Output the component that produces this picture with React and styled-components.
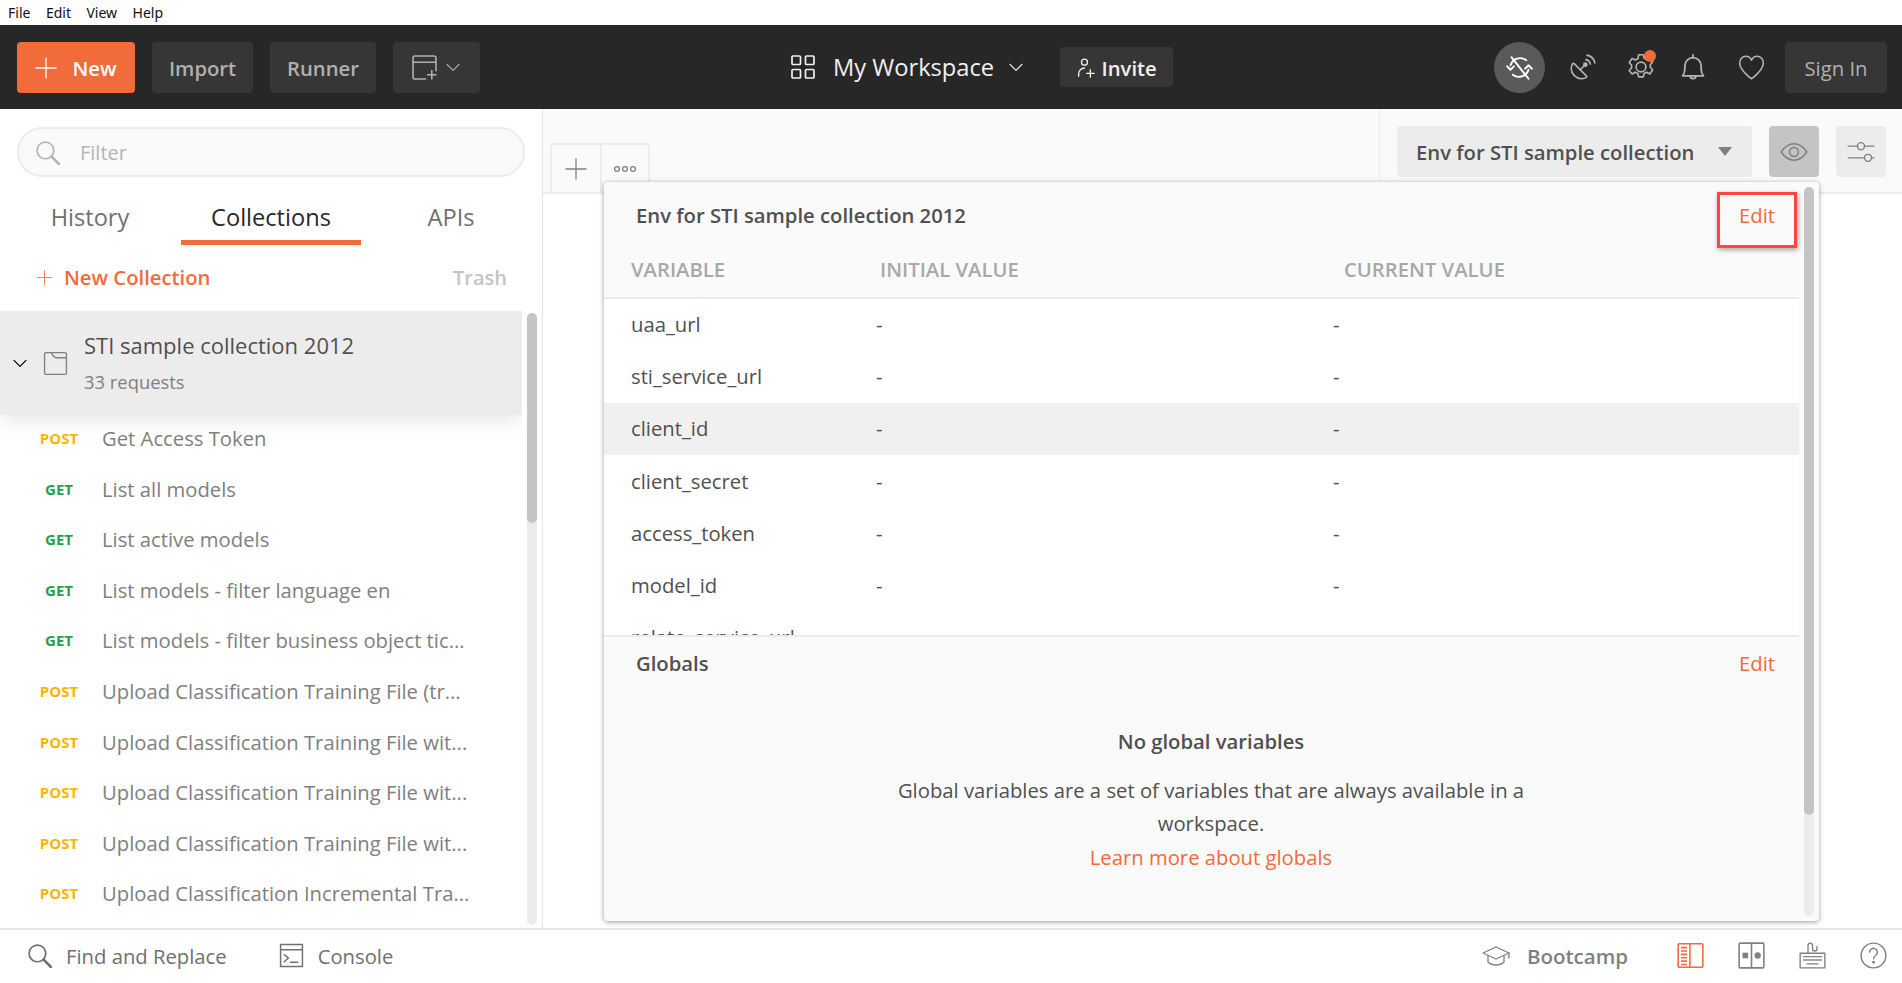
import React from 'react';
import styled, { createGlobalStyle } from 'styled-components';

const GlobalStyle = createGlobalStyle`
  html, body {
    margin: 0;
    padding: 0;
    background: #fff;
    font-family: "Open Sans", "Noto Sans", sans-serif;
  }
  * { box-sizing: border-box; }
`;

const Page = styled.div`
  display: flex;
  flex-direction: column;
  width: 1902px;
  height: 983px;
  overflow: hidden;
`;

const MenuBar = styled.div`
  display: flex;
  align-items: center;
  gap: 15.5px;
  height: 25px;
  padding: 0 8px 1px;
  font-family: "Noto Sans", sans-serif;
  font-size: 14px;
  color: #111;
`;

const Header = styled.header`
  display: flex;
  align-items: center;
  height: 84px;
  padding: 0 15px 0 17px;
  background: #272727;
`;

const Group = styled.div`
  display: flex;
  align-items: center;
`;

const HeaderButton = styled.button`
  display: flex;
  align-items: center;
  justify-content: center;
  height: 51px;
  width: ${(p) => p.$w}px;
  margin-right: 17px;
  padding: 1px 0 0;
  border: none;
  border-radius: 4px;
  background: #363636;
  color: #b0b0b0;
  font: 600 20.25px "Open Sans", sans-serif;
`;

const NewButton = styled(HeaderButton)`
  gap: 15px;
  background: #f26b3a;
  color: #fff;
`;

const WindowButton = styled(HeaderButton)`
  gap: 8px;
  margin-right: 0;
  padding: 0;
`;

const WorkspaceGroup = styled(Group)`
  margin-left: 311px;
  color: #f0f0f0;
`;

const WorkspaceName = styled.span`
  margin: 0 14px 0 18px;
  font-size: 23.7px;
  line-height: 30px;
`;

const InviteButton = styled.button`
  display: flex;
  align-items: center;
  justify-content: center;
  gap: 5px;
  width: 113px;
  height: 40px;
  margin-left: 36px;
  padding: 1px 0 0;
  border: none;
  border-radius: 4px;
  background: #363636;
  color: #f0f0f0;
  font: 600 20.25px "Open Sans", sans-serif;
`;

const HeaderRight = styled(Group)`
  margin-left: auto;
  color: #b4b4b4;
`;

const SyncCircle = styled.div`
  display: flex;
  align-items: center;
  justify-content: center;
  width: 51px;
  height: 51px;
  border-radius: 50%;
  background: #5a5a5a;
  color: #fff;
`;

const HeaderIcon = styled.div`
  position: relative;
  display: flex;
  align-items: center;
  justify-content: center;
  width: 28px;
  height: 28px;
  margin-left: ${(p) => p.$gap}px;
`;

const Dot = styled.span`
  position: absolute;
  top: -3px;
  right: -1px;
  width: 12px;
  height: 12px;
  border-radius: 50%;
  background: #f26b3a;
`;

const SignIn = styled.button`
  width: 102px;
  height: 51px;
  margin-left: 20px;
  padding: 1px 0 0;
  border: none;
  border-radius: 4px;
  background: #363636;
  color: #b0b0b0;
  font: 400 20.25px "Open Sans", sans-serif;
`;

const Body = styled.div`
  display: flex;
  flex: 1;
  min-height: 0;
`;

const Sidebar = styled.aside`
  display: flex;
  flex-direction: column;
  flex: 0 0 543px;
  border-right: 1px solid #e6e6e6;
`;

const FilterBox = styled.div`
  display: flex;
  align-items: center;
  height: 50px;
  margin: 18px 17px 0;
  padding: 0 0 0 16px;
  border: 2px solid #ececec;
  border-radius: 25px;
  background: #fafafa;
  color: #b4b4b4;
  font-size: 20px;
`;

const FilterLabel = styled.span`
  margin-left: 20px;
`;

const Tabs = styled.div`
  display: flex;
  height: 50px;
  margin-top: 18px;
  padding-left: 17px;
`;

const Tab = styled.div`
  display: flex;
  align-items: center;
  justify-content: center;
  width: ${(p) => p.$w}px;
  margin-left: ${(p) => p.$ml || 0}px;
  padding-bottom: 1px;
  border-bottom: 5px solid ${(p) => (p.$active ? '#f26b3a' : 'transparent')};
  color: ${(p) => (p.$active ? '#282828' : '#707070')};
  font-size: 23.6px;
`;

const NewRow = styled.div`
  display: flex;
  align-items: center;
  height: 50px;
  margin-top: 7px;
  padding: 0 35px 0 37px;
  color: #f26b3a;
  font-size: 20.25px;
  font-weight: 600;
`;

const NewRowLabel = styled.span`
  margin-left: 12px;
`;

const Trash = styled.span`
  margin-left: auto;
  color: #c4c4c4;
  font-weight: 600;
  font-size: 20px;
`;

const ListArea = styled.div`
  display: flex;
  flex: 1;
  min-height: 0;
  margin-top: 9px;
`;

const List = styled.div`
  flex: 0 0 522px;
  overflow: hidden;
`;

const CollectionRow = styled.div`
  position: relative;
  display: flex;
  align-items: center;
  height: 104px;
  margin-bottom: -2px;
  padding-left: 12px;
  background: #ececec;
  box-shadow: 0 8px 16px rgba(0, 0, 0, 0.08);
`;

const CollectionIcon = styled.div`
  display: flex;
  margin: 0 16px 0 15px;
  color: #808080;
`;

const CollectionText = styled.div`
  margin-bottom: 3px;
`;

const CollectionName = styled.div`
  color: #505050;
  font-size: 22px;
  line-height: 30px;
`;

const CollectionCount = styled.div`
  margin-top: 10px;
  color: #808080;
  font-size: 18.4px;
  line-height: 24px;
`;

const RequestRow = styled.div`
  display: flex;
  align-items: center;
  height: 50.55px;
`;

const Method = styled.span`
  flex: 0 0 40px;
  margin: 0 23px 0 39px;
  text-align: center;
  color: ${(p) => (p.$verb === 'POST' ? '#ffb400' : '#26a04b')};
  font-size: 15px;
  font-weight: 700;
`;

const RequestName = styled.span`
  color: #808080;
  font-size: 20.25px;
  white-space: nowrap;
`;

const Rail = styled.div`
  flex: 0 0 10px;
  margin: ${(p) => p.$margin};
  border-radius: 5px;
  background: #ececec;
`;

const Thumb = styled.div`
  height: ${(p) => p.$h}px;
  border-radius: 5px;
  background: #c4c4c4;
`;

const Main = styled.main`
  position: relative;
  display: flex;
  flex-direction: column;
  flex: 1;
  min-width: 0;
`;

const TabBar = styled.div`
  display: flex;
  height: 85px;
  padding-left: 7px;
  background: #fafafa;
  border-bottom: 2px solid #ececec;
`;

const TabActions = styled.div`
  display: flex;
  align-self: flex-end;
  height: 51px;
  margin-bottom: -2px;
  border: 2px solid #ececec;
  border-radius: 3px 3px 0 0;
  color: #808080;
`;

const TabAction = styled.div`
  display: flex;
  align-items: center;
  justify-content: center;
  width: ${(p) => p.$w}px;
  border-right: ${(p) => (p.$divider ? '2px solid #ececec' : 'none')};
`;

const EnvArea = styled.div`
  display: flex;
  gap: 17px;
  margin-left: auto;
  padding: 17px 16px 0 17px;
  border-left: 1px solid #ececec;
`;

const EnvSelect = styled.div`
  display: flex;
  align-items: center;
  justify-content: space-between;
  width: 355px;
  height: 51px;
  padding: 0 20px 0 19px;
  border-radius: 4px;
  background: #ececec;
  color: #505050;
  font-size: 20.25px;
  font-weight: 600;
`;

const Caret = styled.span`
  width: 0;
  height: 0;
  border-left: 7px solid transparent;
  border-right: 7px solid transparent;
  border-top: 9px solid #808080;
`;

const EnvButton = styled.div`
  display: flex;
  align-items: center;
  justify-content: center;
  width: 50px;
  height: 51px;
  border-radius: 4px;
  background: ${(p) => (p.$on ? '#c4c4c4' : '#ececec')};
  color: #808080;
`;

const Popup = styled.div`
  position: absolute;
  top: 73px;
  left: 61px;
  display: flex;
  width: 1215px;
  height: 739px;
  border-radius: 4px;
  background: #fafafa;
  box-shadow: 0 1px 5px rgba(0, 0, 0, 0.4);
`;

const PopupBody = styled.div`
  display: flex;
  flex-direction: column;
  flex: 1;
  min-width: 0;
`;

const VarsSection = styled.section`
  flex: 0 0 453px;
  overflow: hidden;
`;

const SectionHead = styled.div`
  display: flex;
  align-items: center;
  justify-content: space-between;
  height: ${(p) => p.$h}px;
  padding: 0 24px 0 32px;
  color: #505050;
  font-size: 20.25px;
  font-weight: 600;
`;

const EditLink = styled.span`
  color: #f26b3a;
  font-size: 20.25px;
  font-weight: 400;
`;

const TableHead = styled.div`
  display: grid;
  grid-template-columns: 249px 464px 1fr;
  align-items: center;
  height: 50.5px;
  padding: 0 0 6.5px 27px;
  border-bottom: 2px solid #ececec;
  color: #a8a8a8;
  font-size: 20.25px;
  font-weight: 600;
`;

const VarRows = styled.div`
  background: #fff;
`;

const VarRow = styled.div`
  display: grid;
  grid-template-columns: 245px 457px 1fr;
  align-items: center;
  height: 52.2px;
  padding: 0 0 1px 27px;
  background: ${(p) => (p.$hi ? '#f0f0f0' : '#fff')};
  color: #505050;
  font-size: 20.25px;
`;

const GlobalsSection = styled.section`
  flex: 1;
  border-top: 2px solid #ececec;
`;

const EmptyState = styled.div`
  display: flex;
  flex-direction: column;
  align-items: center;
  width: 660px;
  margin: 36px 0 0 277px;
  text-align: center;
  color: #505050;
  font-size: 20.25px;
  line-height: 33.5px;
`;

const EmptyTitle = styled.div`
  margin-bottom: 15px;
  font-weight: 600;
`;

const LearnMore = styled.span`
  color: #f26b3a;
`;

const RedBox = styled.div`
  position: absolute;
  top: 10px;
  right: 22px;
  width: 80px;
  height: 56px;
  border: 3px solid #ff4444;
  box-shadow: 1px 2px 5px rgba(0, 0, 0, 0.35);
`;

const EditOverlay = styled(EditLink)`
  position: absolute;
  top: 19px;
  right: 44px;
`;

const Footer = styled.footer`
  display: flex;
  align-items: center;
  flex: 0 0 55px;
  padding: 0 15px 2px 27px;
  border-top: 2px solid #e6e6e6;
  color: #707070;
  font-size: 20.25px;
`;

const FooterItem = styled.div`
  display: flex;
  align-items: center;
  gap: 14px;
  margin-right: 52px;
`;

const FooterRight = styled.div`
  display: flex;
  align-items: center;
  margin-left: auto;
`;

const Bootcamp = styled.div`
  display: flex;
  align-items: center;
  gap: 17px;
  margin-right: 49px;
  color: #808080;
  font-size: 20.5px;
  font-weight: 600;
`;

const FooterIcon = styled.div`
  display: flex;
  margin-left: ${(p) => p.$gap || 0}px;
  color: ${(p) => p.$color || '#808080'};
`;

const Icon = ({ size = 24, w, h, sw = 1.4, children, vb }) => (
  <svg
    width={w || size}
    height={h || size}
    viewBox={vb || '0 0 24 24'}
    fill="none"
    stroke="currentColor"
    strokeWidth={sw}
    strokeLinecap="round"
    strokeLinejoin="round"
  >
    {children}
  </svg>
);

const PlusIcon = ({ size = 22 }) => (
  <Icon size={size}>
    <path d="M12 1v22M1 12h22" />
  </Icon>
);

const Chevron = ({ size = 16 }) => (
  <Icon size={size} sw={1.8}>
    <path d="M3 8l9 9 9-9" />
  </Icon>
);

const SearchIcon = () => (
  <Icon size={25} sw={1.6}>
    <circle cx="10" cy="10" r="8" />
    <path d="M16 16l7 7" strokeWidth="2.6" />
  </Icon>
);

const NewWindowIcon = () => (
  <Icon size={25} sw={1.5}>
    <path d="M13 23H3a2 2 0 0 1-2-2V3a2 2 0 0 1 2-2h18a2 2 0 0 1 2 2v12" />
    <path d="M1 7h22M19 15v8M15 19h8" />
  </Icon>
);

const GridIcon = () => (
  <Icon size={24} sw={1.7}>
    <rect x="1" y="1" width="8.5" height="8.5" rx="1" />
    <rect x="14.5" y="1" width="8.5" height="8.5" rx="1" />
    <rect x="1" y="14.5" width="8.5" height="8.5" rx="1" />
    <rect x="14.5" y="14.5" width="8.5" height="8.5" rx="1" />
  </Icon>
);

const InviteIcon = () => (
  <Icon size={20} sw={1.6}>
    <circle cx="9" cy="5" r="3.6" />
    <path d="M2 22v-3a7 7 0 0 1 7-7M16 14v9M11.5 18.5h9" />
  </Icon>
);

const SyncOffIcon = () => (
  <Icon size={27} sw={1.7}>
    <path d="M4 10a9 9 0 0 1 14-4.5M20 14a9 9 0 0 1-14 4.5" strokeDasharray="20 2" />
    <path d="M1 11l3 3 3-3M17 13l3-3 3 3" />
    <path d="M5 3l15 19" />
  </Icon>
);

const SatelliteIcon = () => (
  <Icon size={27} sw={1.4}>
    <path d="M3 9a9 9 0 0 0 12 12c1-.5 1-1 .4-1.6L4.6 8.6C4 8 3.4 8 3 9z" />
    <path d="M10 14l4-4" />
    <circle cx="14.5" cy="9.5" r="1.4" fill="currentColor" />
    <path d="M15 5a5 5 0 0 1 4 4M16 1a9 9 0 0 1 7 7" />
  </Icon>
);

const GearIcon = () => (
  <Icon size={28} sw={1.4}>
    <circle cx="12" cy="12" r="4.2" />
    <path d="M10 1.5h4l.7 3 2.2 1 2.7-1.5 2.4 3.6-2 2.2v2.4l2 2.2-2.4 3.6-2.7-1.5-2.2 1-.7 3h-4l-.7-3-2.2-1-2.7 1.5L1.9 15l2-2.2v-2.4l-2-2.2L4.4 4.6 7.1 6l2.2-1z" />
  </Icon>
);

const BellIcon = () => (
  <Icon size={28} sw={1.5}>
    <path d="M3 19.5h18c-1.5-1.5-2-3-2-5.5v-3a7 7 0 0 0-14 0v3c0 2.5-.5 4-2 5.5z" />
    <path d="M12 4V1.5M9.5 19.5a2.5 2.5 0 0 0 5 0" />
  </Icon>
);

const HeartIcon = () => (
  <Icon size={27} sw={1.4}>
    <path d="M12 22S2 15 1.5 8.5C1.2 4.5 4 2 7 2c2.3 0 4 1.3 5 3.5C13 3.3 14.700 2 17 2c3 0 5.800 2.500 5.500 6.500C22 15 12 22 12 22z" />
  </Icon>
);

const FolderIcon = () => (
  <Icon size={25} sw={1.3}>
    <rect x="1.5" y="1.5" width="21" height="21" rx="1.5" />
    <path d="M8 1.5c1 2.5 2 4.5 4.5 5H22.5" />
  </Icon>
);

const DotsIcon = () => (
  <Icon w={24} h={8} vb="0 0 24 8" sw={1.3}>
    <circle cx="4" cy="4" r="2.4" />
    <circle cx="12" cy="4" r="2.4" />
    <circle cx="20" cy="4" r="2.4" />
  </Icon>
);

const EyeIcon = () => (
  <Icon size={28} sw={1.3}>
    <path d="M1 12c3-4.5 7-7 11-7s8 2.5 11 7c-3 4.5-7 7-11 7s-8-2.5-11-7z" />
    <circle cx="12" cy="12" r="3.8" />
  </Icon>
);

const SlidersIcon = () => (
  <Icon size={28} sw={1.2}>
    <path d="M1 7h8M15 7h8M1 17h14M21 17h2" />
    <circle cx="12" cy="7" r="3" />
    <circle cx="18" cy="17" r="3" />
  </Icon>
);

const ConsoleIcon = () => (
  <Icon size={25} sw={1.4}>
    <rect x="1.5" y="1.5" width="21" height="21" />
    <path d="M1.5 6.5h21M5 11l4 3.5L5 18M11 18.5h7" />
  </Icon>
);

const CapIcon = () => (
  <Icon w={28} h={22} vb="0 0 28 22" sw={1.3}>
    <path d="M14 2L1 8l13 6 13-6z" />
    <path d="M6 11v6c2 2 5 3 8 3s6-1 8-3v-6M27 8v5" />
  </Icon>
);

const PaneOneIcon = () => (
  <Icon size={27} sw={1.4}>
    <rect x="1" y="1.5" width="22" height="21" rx="1" />
    <path d="M11.5 1.5v21" />
    <path d="M3.5 5h5.5M3.5 8h5.5M3.5 11h5.5M3.5 14h5.5M3.5 17h5.5M3.5 20h5.5" strokeWidth="1.5" strokeLinecap="butt" />
  </Icon>
);

const PaneTwoIcon = () => (
  <Icon size={27} sw={1.4}>
    <rect x="1" y="1" width="22" height="22" rx="1" />
    <path d="M12 1v22" />
    <rect x="4" y="9.5" width="5" height="5" fill="currentColor" stroke="none" />
    <circle cx="17.5" cy="12" r="2.8" fill="currentColor" stroke="none" />
  </Icon>
);

const KeyboardIcon = () => (
  <Icon size={27} sw={1.2}>
    <rect x="1" y="10" width="22" height="13" />
    <path d="M4 13h16M4 16h16" strokeDasharray="1.2 1" />
    <path d="M7 19.5h10M8 10V3a2 2 0 0 1 4 0v3a2 2 0 0 0 4 0V4" />
  </Icon>
);

const HelpIcon = () => (
  <Icon size={27} sw={1.3}>
    <circle cx="12" cy="12" r="11" />
    <path d="M8.5 9a3.5 3.5 0 1 1 5.500 3c-1.300.9-2 1.500-2 3" />
    <circle cx="12" cy="18" r=".6" fill="currentColor" />
  </Icon>
);

const requests = [
  ['POST', 'Get Access Token'],
  ['GET', 'List all models'],
  ['GET', 'List active models'],
  ['GET', 'List models - filter language en'],
  ['GET', 'List models - filter business object tic...'],
  ['POST', 'Upload Classification Training File (tr...'],
  ['POST', 'Upload Classification Training File wit...'],
  ['POST', 'Upload Classification Training File wit...'],
  ['POST', 'Upload Classification Training File wit...'],
  ['POST', 'Upload Classification Incremental Tra...'],
];

const variables = ['uaa_url', 'sti_service_url', 'client_id', 'client_secret', 'access_token', 'model_id', 'relate_service_url'];

export default function App() {
  return (
    <Page>
      <GlobalStyle />
      <MenuBar>
        <span>File</span>
        <span>Edit</span>
        <span>View</span>
        <span>Help</span>
      </MenuBar>

      <Header>
        <Group>
          <NewButton $w={118}>
            <PlusIcon />
            New
          </NewButton>
          <HeaderButton $w={101}>Import</HeaderButton>
          <HeaderButton $w={106}>Runner</HeaderButton>
          <WindowButton $w={87}>
            <NewWindowIcon />
            <Chevron />
          </WindowButton>
        </Group>
        <WorkspaceGroup>
          <GridIcon />
          <WorkspaceName>My Workspace</WorkspaceName>
          <Chevron />
          <InviteButton>
            <InviteIcon />
            Invite
          </InviteButton>
        </WorkspaceGroup>
        <HeaderRight>
          <SyncCircle>
            <SyncOffIcon />
          </SyncCircle>
          <HeaderIcon $gap={23}>
            <SatelliteIcon />
          </HeaderIcon>
          <HeaderIcon $gap={31}>
            <GearIcon />
            <Dot />
          </HeaderIcon>
          <HeaderIcon $gap={24}>
            <BellIcon />
          </HeaderIcon>
          <HeaderIcon $gap={30}>
            <HeartIcon />
          </HeaderIcon>
          <SignIn>Sign In</SignIn>
        </HeaderRight>
      </Header>

      <Body>
        <Sidebar>
          <FilterBox>
            <SearchIcon />
            <FilterLabel>Filter</FilterLabel>
          </FilterBox>
          <Tabs>
            <Tab $w={146}>History</Tab>
            <Tab $w={180} $ml={18} $active>Collections</Tab>
            <Tab $w={180}>APIs</Tab>
          </Tabs>
          <NewRow>
            <PlusIcon size={15} />
            <NewRowLabel>New Collection</NewRowLabel>
            <Trash>Trash</Trash>
          </NewRow>
          <ListArea>
            <List>
              <CollectionRow>
                <Chevron />
                <CollectionIcon>
                  <FolderIcon />
                </CollectionIcon>
                <CollectionText>
                  <CollectionName>STI sample collection 2012</CollectionName>
                  <CollectionCount>33 requests</CollectionCount>
                </CollectionText>
              </CollectionRow>
              {requests.map(([verb, name], i) => (
                <RequestRow key={i}>
                  <Method $verb={verb}>{verb}</Method>
                  <RequestName>{name}</RequestName>
                </RequestRow>
              ))}
            </List>
            <Rail $margin="2px 5px 3px 5px">
              <Thumb $h={210} />
            </Rail>
          </ListArea>
        </Sidebar>

        <Main>
          <TabBar>
            <TabActions>
              <TabAction $w={50} $divider>
                <PlusIcon />
              </TabAction>
              <TabAction $w={46}>
                <DotsIcon />
              </TabAction>
            </TabActions>
            <EnvArea>
              <EnvSelect>
                Env for STI sample collection
                <Caret />
              </EnvSelect>
              <EnvButton $on>
                <EyeIcon />
              </EnvButton>
              <EnvButton>
                <SlidersIcon />
              </EnvButton>
            </EnvArea>
          </TabBar>

          <Popup>
            <PopupBody>
              <VarsSection>
                <SectionHead $h={66}>Env for STI sample collection 2012</SectionHead>
                <TableHead>
                  <span>VARIABLE</span>
                  <span>INITIAL VALUE</span>
                  <span>CURRENT VALUE</span>
                </TableHead>
                <VarRows>
                  {variables.map((v, i) => (
                    <VarRow key={v} $hi={i === 2}>
                      <span>{v}</span>
                      <span>-</span>
                      <span>-</span>
                    </VarRow>
                  ))}
                </VarRows>
              </VarsSection>
              <GlobalsSection>
                <SectionHead $h={52}>
                  Globals
                  <EditLink>Edit</EditLink>
                </SectionHead>
                <EmptyState>
                  <EmptyTitle>No global variables</EmptyTitle>
                  <span>Global variables are a set of variables that are always available in a workspace.</span>
                  <LearnMore>Learn more about globals</LearnMore>
                </EmptyState>
              </GlobalsSection>
            </PopupBody>
            <Rail $margin="5px">
              <Thumb $h={628} />
            </Rail>
            <EditOverlay>Edit</EditOverlay>
            <RedBox />
          </Popup>
        </Main>
      </Body>

      <Footer>
        <FooterItem>
          <SearchIcon />
          Find and Replace
        </FooterItem>
        <FooterItem>
          <ConsoleIcon />
          Console
        </FooterItem>
        <FooterRight>
          <Bootcamp>
            <CapIcon />
            Bootcamp
          </Bootcamp>
          <FooterIcon $color="#f26b3a">
            <PaneOneIcon />
          </FooterIcon>
          <FooterIcon $gap={34}>
            <PaneTwoIcon />
          </FooterIcon>
          <FooterIcon $gap={34}>
            <KeyboardIcon />
          </FooterIcon>
          <FooterIcon $gap={34}>
            <HelpIcon />
          </FooterIcon>
        </FooterRight>
      </Footer>
    </Page>
  );
}
